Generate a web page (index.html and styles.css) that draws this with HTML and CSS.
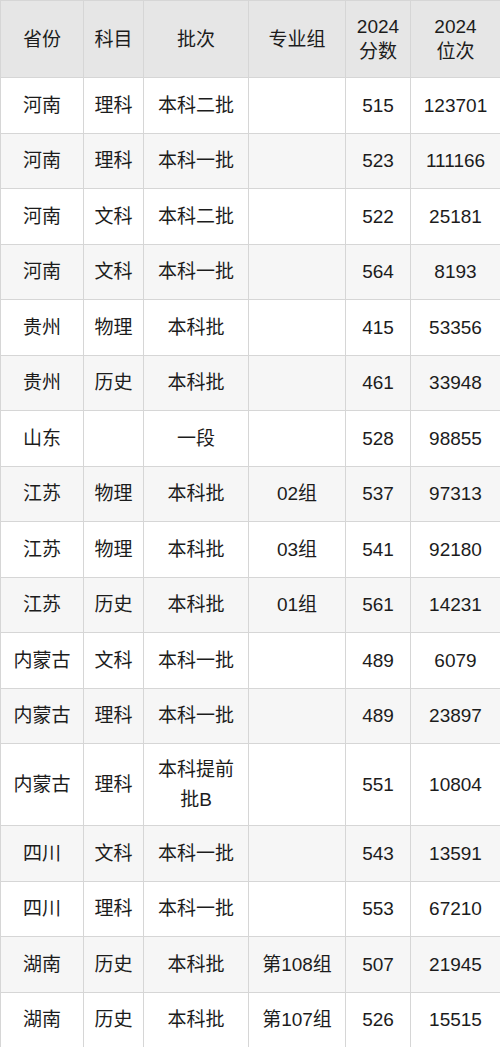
FILE: index.html
```html
<!DOCTYPE html>
<html lang="zh">
<head>
<meta charset="utf-8">
<link rel="stylesheet" href="styles.css">
</head>
<body>
<table class="score-table">
  <colgroup>
    <col class="c1"><col class="c2"><col class="c3"><col class="c4"><col class="c5"><col class="c6">
  </colgroup>
  <thead>
    <tr class="head">
      <th>省份</th><th>科目</th><th>批次</th><th>专业组</th><th>2024<br>分数</th><th>2024<br>位次</th>
    </tr>
  </thead>
  <tbody>
    <tr><td>河南</td><td>理科</td><td>本科二批</td><td></td><td>515</td><td>123701</td></tr>
    <tr><td>河南</td><td>理科</td><td>本科一批</td><td></td><td>523</td><td>111166</td></tr>
    <tr><td>河南</td><td>文科</td><td>本科二批</td><td></td><td>522</td><td>25181</td></tr>
    <tr><td>河南</td><td>文科</td><td>本科一批</td><td></td><td>564</td><td>8193</td></tr>
    <tr><td>贵州</td><td>物理</td><td>本科批</td><td></td><td>415</td><td>53356</td></tr>
    <tr><td>贵州</td><td>历史</td><td>本科批</td><td></td><td>461</td><td>33948</td></tr>
    <tr><td>山东</td><td></td><td>一段</td><td></td><td>528</td><td>98855</td></tr>
    <tr><td>江苏</td><td>物理</td><td>本科批</td><td>02组</td><td>537</td><td>97313</td></tr>
    <tr><td>江苏</td><td>物理</td><td>本科批</td><td>03组</td><td>541</td><td>92180</td></tr>
    <tr><td>江苏</td><td>历史</td><td>本科批</td><td>01组</td><td>561</td><td>14231</td></tr>
    <tr><td>内蒙古</td><td>文科</td><td>本科一批</td><td></td><td>489</td><td>6079</td></tr>
    <tr><td>内蒙古</td><td>理科</td><td>本科一批</td><td></td><td>489</td><td>23897</td></tr>
    <tr class="tall"><td>内蒙古</td><td>理科</td><td>本科提前批B</td><td></td><td>551</td><td>10804</td></tr>
    <tr><td>四川</td><td>文科</td><td>本科一批</td><td></td><td>543</td><td>13591</td></tr>
    <tr><td>四川</td><td>理科</td><td>本科一批</td><td></td><td>553</td><td>67210</td></tr>
    <tr><td>湖南</td><td>历史</td><td>本科批</td><td>第108组</td><td>507</td><td>21945</td></tr>
    <tr><td>湖南</td><td>历史</td><td>本科批</td><td>第107组</td><td>526</td><td>15515</td></tr>
  </tbody>
</table>
</body>
</html>
```

FILE: styles.css
```css
html, body {
  margin: 0;
  padding: 0;
  background: #ffffff;
}
.score-table {
  width: 500px;
  table-layout: fixed;
  border-collapse: collapse;
  font-family: "Liberation Sans", "Noto Sans CJK SC", sans-serif;
  font-size: 19px;
  color: #1c1c1c;
}
.c1 { width: 83px; }
.c2 { width: 60px; }
.c3 { width: 105px; }
.c4 { width: 97px; }
.c5 { width: 65px; }
.c6 { width: 90px; }
.score-table th,
.score-table td {
  border: 1px solid #d6d6d6;
  text-align: center;
  vertical-align: middle;
  padding: 0 6px;
  line-height: 27px;
  font-weight: normal;
}
.score-table .head th {
  background: #e6e6e6;
  height: 76px;
  line-height: 25px;
}
.score-table tbody tr {
  height: 55.5px;
}
.score-table tbody tr:nth-child(even) {
  background: #f6f6f6;
}
.score-table tbody tr.tall {
  height: 82px;
}
.score-table tbody tr.tall td {
  line-height: 30px;
}
```
